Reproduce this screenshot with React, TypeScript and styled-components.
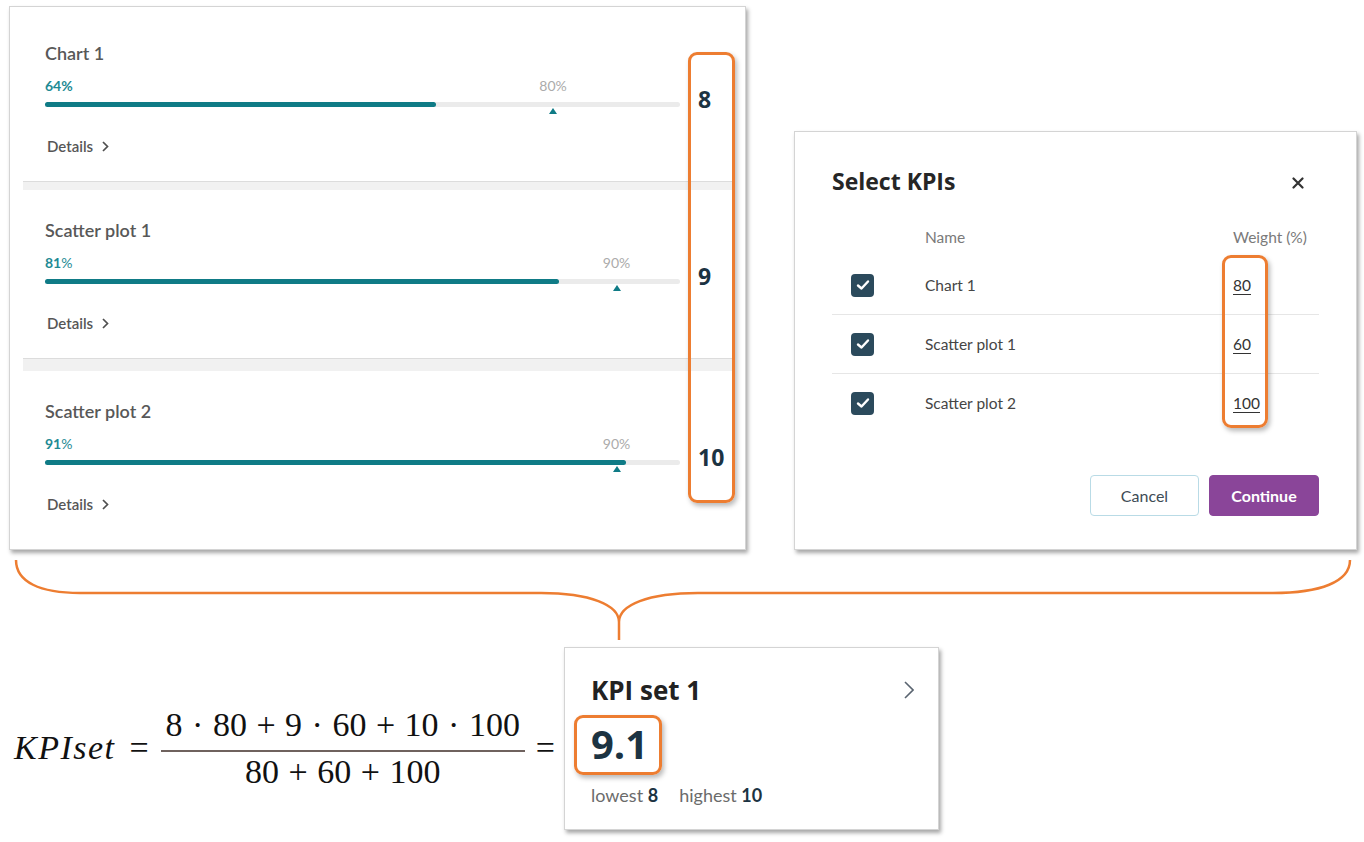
import React from "react";
import styled, { createGlobalStyle } from "styled-components";

const ORANGE = "#ed7d31";
const TEAL = "#0f7b86";
const INK = "#1c3342";

const GlobalStyle = createGlobalStyle`
  html, body { margin: 0; padding: 0; background: #fff; }
  body {
    font-family: Lato, "Liberation Sans", sans-serif;
    width: 1364px;
    height: 842px;
    overflow: hidden;
  }
`;

type Metric = {
  name: string;
  value: number;
  fill: number;
  target: number;
  score: number;
  boldUnit?: boolean;
};

const metrics: Metric[] = [
  { name: "Chart 1", value: 64, fill: 61.5, target: 80, score: 8, boldUnit: true },
  { name: "Scatter plot 1", value: 81, fill: 81, target: 90, score: 9 },
  { name: "Scatter plot 2", value: 91, fill: 91.5, target: 90, score: 10 },
];

const weights = [
  { name: "Chart 1", weight: 80 },
  { name: "Scatter plot 1", weight: 60 },
  { name: "Scatter plot 2", weight: 100 },
];

const Page = styled.div`
  display: flex;
  flex-direction: column;
`;

const TopRow = styled.div`
  display: flex;
  align-items: flex-end;
  gap: 48px;
  margin: 6px 0 0 9px;
`;

const Card = styled.div`
  position: relative;
  box-sizing: border-box;
  background: #fff;
  border: 1px solid #d4d4d4;
  box-shadow: 2px 3px 4px rgba(0, 0, 0, 0.35);
`;

const KpiCard = styled(Card)`
  width: 737px;
  height: 544px;
  padding: 6px 13px 0 13px;
`;

const Highlight = styled.div`
  position: absolute;
  box-sizing: border-box;
  border: 3px solid ${ORANGE};
  border-radius: 9px;
  box-shadow: 2px 3px 5px rgba(0, 0, 0, 0.28);
  pointer-events: none;
`;

const ScoreHighlight = styled(Highlight)`
  left: 678px;
  top: 45px;
  width: 47px;
  height: 451px;
`;

const WeightHighlight = styled(Highlight)`
  left: 427px;
  top: 123px;
  width: 46px;
  height: 173px;
`;

const ValueHighlight = styled(Highlight)`
  left: -17px;
  right: -14px;
  top: -5px;
  bottom: -7px;
`;

const Section = styled.div`
  display: grid;
  grid-template-columns: 635px 34px;
  column-gap: 18px;
  padding: 29px 0 25px 22px;
`;

const Divider = styled.div<{ $h: number }>`
  box-sizing: border-box;
  height: ${(p) => p.$h}px;
  background: #f1f1f1;
  border-top: 1px solid #dcdcdc;
`;

const MetricBody = styled.div`
  display: flex;
  flex-direction: column;
`;

const MetricTitle = styled.div`
  font-size: 18px;
  line-height: 22px;
  font-weight: 600;
  color: #585858;
`;

const Meter = styled.div`
  position: relative;
  margin-top: 14px;
`;

const MeterLabel = styled.div`
  height: 16px;
  font-size: 14px;
  line-height: 16px;
  font-weight: 700;
  color: #1e8a94;
`;

const Unit = styled.span<{ $bold?: boolean }>`
  font-weight: ${(p) => (p.$bold ? 700 : 400)};
`;

const TargetLabel = styled.span`
  position: absolute;
  top: 0;
  transform: translateX(-50%);
  font-size: 14px;
  line-height: 16px;
  color: #ababab;
`;

const Track = styled.div`
  position: relative;
  margin-top: 8px;
  height: 5px;
  border-radius: 3px;
  background: #ebebeb;
`;

const Fill = styled.div`
  height: 100%;
  border-radius: 3px;
  background: ${TEAL};
`;

const Marker = styled.span`
  position: absolute;
  top: 6px;
  transform: translateX(-50%);
  width: 0;
  height: 0;
  border-left: 4px solid transparent;
  border-right: 4px solid transparent;
  border-bottom: 6px solid ${TEAL};
`;

const DetailsLink = styled.div`
  display: flex;
  align-items: center;
  gap: 9px;
  margin-top: 29px;
  padding-left: 2px;
  font-size: 15px;
  line-height: 20px;
  font-weight: 600;
  color: #565656;
`;

const Score = styled.div`
  align-self: start;
  margin-top: 43px;
  font-family: "Open Sans", "Liberation Sans", sans-serif;
  font-size: 23px;
  line-height: 28px;
  font-weight: 700;
  color: ${INK};
`;

const Dialog = styled(Card)`
  display: flex;
  flex-direction: column;
  width: 563px;
  height: 419px;
  padding: 34px 37px 33px 37px;
`;

const DialogHeader = styled.div`
  display: flex;
  align-items: center;
  justify-content: space-between;
  height: 30px;
`;

const DialogTitle = styled.div`
  font-family: "Open Sans", "Liberation Sans", sans-serif;
  font-size: 23px;
  font-weight: 700;
  color: #262626;
`;

const CloseButton = styled.span`
  display: flex;
  margin-right: 15px;
  margin-top: 4px;
`;

const TableRow = styled.div<{ $head?: boolean; $last?: boolean }>`
  display: grid;
  grid-template-columns: 93px 1fr 86px;
  align-items: center;
  height: ${(p) => (p.$head ? 36 : 58)}px;
  margin-top: ${(p) => (p.$head ? 23 : 0)}px;
  border-bottom: 1px solid ${(p) => (p.$head || p.$last ? "transparent" : "#e6e6e6")};
  font-size: 15.5px;
  color: ${(p) => (p.$head ? "#7a7a7a" : "#454545")};
`;

const CheckCell = styled.div`
  display: flex;
  padding-left: 19px;
`;

const CheckBox = styled.span`
  display: flex;
  align-items: center;
  justify-content: center;
  width: 23px;
  height: 23px;
  border-radius: 4px;
  background: #2b4a5c;
`;

const WeightValue = styled.span`
  text-decoration: underline;
  text-underline-offset: 3px;
  color: #333;
`;

const DialogFooter = styled.div`
  display: flex;
  justify-content: flex-end;
  gap: 10px;
  margin-top: auto;
`;

const Button = styled.button<{ $primary?: boolean }>`
  box-sizing: border-box;
  height: 41px;
  width: ${(p) => (p.$primary ? 110 : 109)}px;
  border-radius: 4px;
  border: 1px solid ${(p) => (p.$primary ? "#8a4599" : "#b9dbe6")};
  background: ${(p) => (p.$primary ? "#8a4599" : "#fff")};
  color: ${(p) => (p.$primary ? "#fff" : "#3d4b55")};
  font-family: Lato, "Liberation Sans", sans-serif;
  font-size: 16px;
  font-weight: ${(p) => (p.$primary ? 700 : 400)};
`;

const Brace = styled.svg`
  display: block;
`;

const BottomRow = styled.div`
  display: flex;
  align-items: center;
  padding-left: 14px;
`;

const Formula = styled.div`
  display: flex;
  align-items: center;
  width: 550px;
  margin-top: 19px;
  font-family: "Liberation Serif", "Times New Roman", serif;
  font-size: 34px;
  color: #111;
`;

const MathVar = styled.span`
  font-style: italic;
  letter-spacing: 1.5px;
`;

const Equals = styled.span<{ $left: number; $right: number }>`
  margin: 0 ${(p) => p.$right}px 0 ${(p) => p.$left}px;
`;

const Fraction = styled.div`
  display: flex;
  flex-direction: column;
  align-items: center;
  width: 364px;
`;

const Numerator = styled.div`
  line-height: 38px;
  padding-bottom: 6px;
  white-space: pre;
  word-spacing: 1px;
`;

const FractionBar = styled.div`
  align-self: stretch;
  height: 2px;
  background: #6f625e;
`;

const Denominator = styled.div`
  line-height: 38px;
  padding-top: 1px;
  white-space: pre;
  word-spacing: 1px;
`;

const SetCard = styled(Card)`
  width: 375px;
  height: 183px;
  padding: 27px 24px 0 26px;
  display: flex;
  flex-direction: column;
`;

const SetHeader = styled.div`
  display: flex;
  align-items: center;
  justify-content: space-between;
  height: 30px;
`;

const SetTitle = styled.div`
  font-family: "Open Sans", "Liberation Sans", sans-serif;
  font-size: 26px;
  font-weight: 700;
  color: #222;
`;

const SetValue = styled.span`
  position: relative;
  align-self: flex-start;
  margin-top: 15px;
  font-family: "Open Sans", "Liberation Sans", sans-serif;
  font-size: 40px;
  line-height: 48px;
  font-weight: 700;
  color: ${INK};
`;

const Stats = styled.div`
  display: flex;
  gap: 21px;
  margin-top: 17px;
  font-size: 18px;
  line-height: 20px;
  color: #6b6b6b;
`;

const StatNumber = styled.b`
  font-weight: 700;
  color: ${INK};
`;

const ChevronSmall = () => (
  <svg width="7" height="11" viewBox="0 0 7 11">
    <polyline points="1,1 5.5,5.5 1,10" fill="none" stroke="#4f4f4f" strokeWidth="1.7" />
  </svg>
);

const Check = () => (
  <svg width="14" height="12" viewBox="0 0 14 12">
    <polyline points="2,6.5 5.5,9.5 12,2.5" fill="none" stroke="#fff" strokeWidth="2.4" strokeLinecap="round" strokeLinejoin="round" />
  </svg>
);

const App = () => {
  return (
    <Page>
      <GlobalStyle />
      <TopRow>
        <KpiCard>
          {metrics.map((m, i) => (
            <React.Fragment key={m.name}>
              {i > 0 ? <Divider $h={i === 1 ? 9 : 13} /> : null}
              <Section>
                <MetricBody>
                  <MetricTitle>{m.name}</MetricTitle>
                  <Meter>
                    <MeterLabel>
                      {m.value}
                      <Unit $bold={m.boldUnit}>%</Unit>
                    </MeterLabel>
                    <TargetLabel style={{ left: `${m.target}%` }}>{m.target}%</TargetLabel>
                    <Track>
                      <Fill style={{ width: `${m.fill}%` }} />
                      <Marker style={{ left: `${m.target}%` }} />
                    </Track>
                  </Meter>
                  <DetailsLink>
                    Details
                    <ChevronSmall />
                  </DetailsLink>
                </MetricBody>
                <Score>{m.score}</Score>
              </Section>
            </React.Fragment>
          ))}
          <ScoreHighlight />
        </KpiCard>

        <Dialog>
          <DialogHeader>
            <DialogTitle>Select KPIs</DialogTitle>
            <CloseButton>
              <svg width="12" height="12" viewBox="0 0 12 12">
                <path d="M1.5 1.5L10.5 10.5M10.5 1.5L1.5 10.5" stroke="#333" strokeWidth="2.2" strokeLinecap="round" />
              </svg>
            </CloseButton>
          </DialogHeader>
          <TableRow $head>
            <span />
            <span>Name</span>
            <span>Weight (%)</span>
          </TableRow>
          {weights.map((w, i) => (
            <TableRow key={w.name} $last={i === weights.length - 1}>
              <CheckCell>
                <CheckBox>
                  <Check />
                </CheckBox>
              </CheckCell>
              <span>{w.name}</span>
              <span>
                <WeightValue>{w.weight}</WeightValue>
              </span>
            </TableRow>
          ))}
          <DialogFooter>
            <Button>Cancel</Button>
            <Button $primary>Continue</Button>
          </DialogFooter>
          <WeightHighlight />
        </Dialog>
      </TopRow>

      <Brace width="1364" height="97" viewBox="0 0 1364 97">
        <path
          d="M16 10 C16 32 40 43 80 43 L541 43 C590 43 619 55 619 72 L619 90 M619 72 C619 55 648 43 698 43 L1273 43 C1320 43 1350 32 1350 10"
          fill="none"
          stroke={ORANGE}
          strokeWidth="2.5"
        />
      </Brace>

      <BottomRow>
        <Formula>
          <MathVar>KPIset</MathVar>
          <Equals $left={14} $right={12}>=</Equals>
          <Fraction>
            <Numerator>8 · 80 + 9 · 60 + 10 · 100</Numerator>
            <FractionBar />
            <Denominator>80 + 60 + 100</Denominator>
          </Fraction>
          <Equals $left={11} $right={0}>=</Equals>
        </Formula>
        <SetCard>
          <SetHeader>
            <SetTitle>KPI set 1</SetTitle>
            <svg width="10" height="18" viewBox="0 0 10 18">
              <polyline points="1,1 9,9 1,17" fill="none" stroke="#5a6470" strokeWidth="1.6" />
            </svg>
          </SetHeader>
          <SetValue>
            9.1
            <ValueHighlight />
          </SetValue>
          <Stats>
            <span>
              lowest <StatNumber>8</StatNumber>
            </span>
            <span>
              highest <StatNumber>10</StatNumber>
            </span>
          </Stats>
        </SetCard>
      </BottomRow>
    </Page>
  );
};

export default App;
